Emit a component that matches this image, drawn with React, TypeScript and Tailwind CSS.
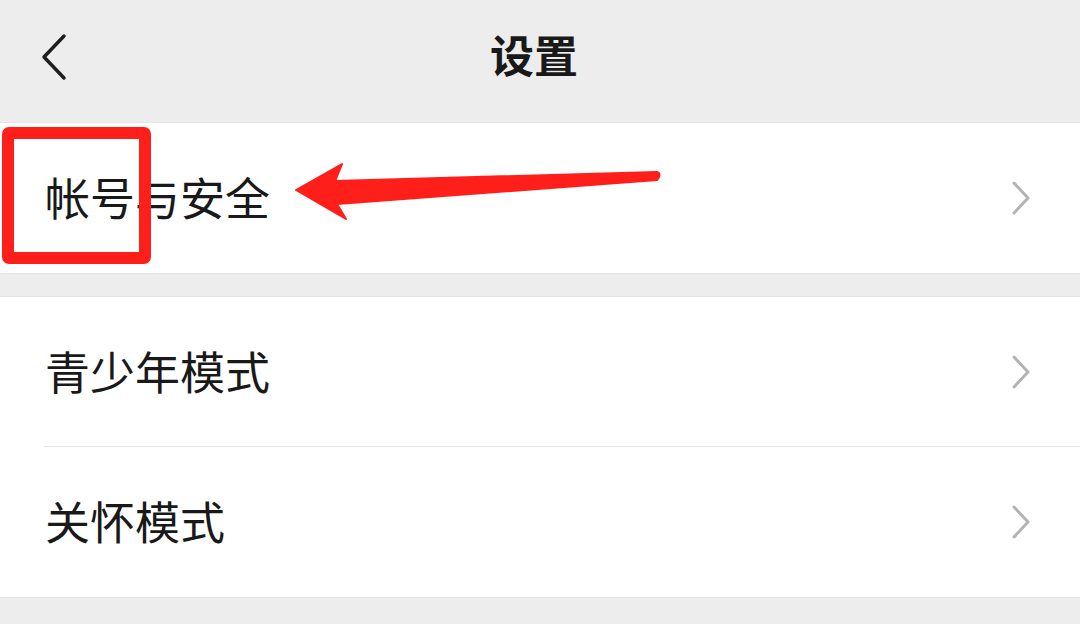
import React from "react";

const font = { fontFamily: '"Noto Sans CJK SC", "Noto Sans", sans-serif' };

function Chevron() {
  return (
    <svg width="22" height="36" viewBox="0 0 22 36" className="shrink-0">
      <path
        d="M4 3 L18 18 L4 33"
        fill="none"
        stroke="#b3b3b3"
        strokeWidth="3"
        strokeLinecap="round"
        strokeLinejoin="round"
      />
    </svg>
  );
}

function Row({ label, divider }: { label: string; divider?: boolean }) {
  return (
    <div className="relative flex h-[150px] items-center justify-between bg-white pl-[45px] pr-[48px]">
      <span className="pb-[4px] text-[45px] leading-none text-[#191919]">{label}</span>
      <Chevron />
      {divider && (
        <div className="absolute bottom-0 left-[44px] right-0 h-px bg-[#e6e6e6]" />
      )}
    </div>
  );
}

export default function App() {
  return (
    <div className="relative h-[624px] w-[1080px] overflow-hidden bg-[#ededed]" style={font}>
      {/* header */}
      <div className="relative flex h-[122px] items-center justify-center pb-[14px] pr-[12px]">
        <svg width="30" height="48" viewBox="0 0 30 48" className="absolute left-[38px] top-[33px]">
          <path
            d="M26 3 L6 24 L26 45"
            fill="none"
            stroke="#1f1f1f"
            strokeWidth="3.5"
            strokeLinecap="round"
            strokeLinejoin="round"
          />
        </svg>
        <span className="text-[44px] font-bold leading-none text-[#191919]">设置</span>
      </div>

      <div className="border-y border-[#e3e3e3]">
        <Row label="帐号与安全" />
      </div>

      <div className="h-[22px]" />

      <div className="border-y border-[#e3e3e3]">
        <Row label="青少年模式" divider />
        <Row label="关怀模式" />
      </div>

      {/* annotation box */}
      <div className="absolute left-[2px] top-[127px] h-[137px] w-[149px] rounded-[7px] border-[12px] border-[#ff1f1a]" />

      {/* annotation arrow */}
      <svg width="1080" height="624" className="pointer-events-none absolute left-0 top-0">
        <path
          d="M296 190 L342 164 L335 181 L657 172 Q662 174 657 180 L337 204 L346 219 Z"
          fill="#ff1f1a"
          stroke="#ff1f1a"
          strokeWidth="2"
          strokeLinejoin="round"
        />
      </svg>
    </div>
  );
}
